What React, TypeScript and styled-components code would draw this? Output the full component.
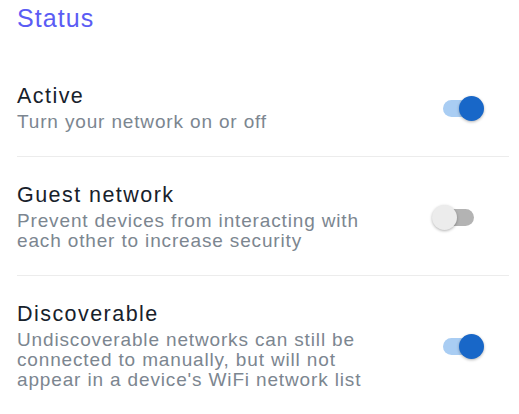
import React from "react";
import styled, { createGlobalStyle } from "styled-components";

const Global = createGlobalStyle`
  html, body { margin: 0; padding: 0; background: #ffffff; }
  body { font-family: "Liberation Sans", Arial, sans-serif; }
`;

const Page = styled.div`
  padding: 4px 10px 0 17px;
  background: #ffffff;
`;

const Heading = styled.h2`
  margin: 0 0 25px 0;
  font-size: 25px;
  line-height: 29px;
  font-weight: 400;
  letter-spacing: 1.1px;
  color: #5b5cf4;
`;

const Row = styled.div<{ $last?: boolean }>`
  display: flex;
  align-items: center;
  justify-content: space-between;
  padding: 26px 0 24px 0;
  border-bottom: ${(p) => (p.$last ? "none" : "1px solid #ececec")};
`;

const TextCol = styled.div`
  display: flex;
  flex-direction: column;
  gap: 4px;
  width: 372px;
`;

const Title = styled.div`
  font-size: 21.5px;
  line-height: 24px;
  letter-spacing: 1.45px;
  color: #17212b;
`;

const Sub = styled.div`
  font-size: 19px;
  line-height: 20px;
  letter-spacing: 0.85px;
  color: #7c8690;
`;

const SwitchBox = styled.div`
  position: relative;
  flex: 0 0 auto;
  width: 52px;
  height: 25px;
  margin-right: 25px;
`;

const Track = styled.div<{ $on: boolean }>`
  position: absolute;
  left: 11px;
  top: 4px;
  width: 31px;
  height: 17px;
  border-radius: 9px;
  background: ${(p) => (p.$on ? "#a9cdf3" : "#b3b3b3")};
`;

const Knob = styled.div<{ $on: boolean }>`
  position: absolute;
  top: 0;
  left: ${(p) => (p.$on ? "27px" : "0px")};
  width: 25px;
  height: 25px;
  border-radius: 50%;
  background: ${(p) => (p.$on ? "#1867c8" : "#ececec")};
  box-shadow: 0 1px 3px rgba(0, 0, 0, 0.3);
`;

const Switch = ({ on }: { on: boolean }) => (
  <SwitchBox>
    <Track $on={on} />
    <Knob $on={on} />
  </SwitchBox>
);

const items = [
  { title: "Active", sub: "Turn your network on or off", on: true },
  {
    title: "Guest network",
    sub: "Prevent devices from interacting with each other to increase security",
    on: false,
  },
  {
    title: "Discoverable",
    sub: "Undiscoverable networks can still be connected to manually, but will not appear in a device's WiFi network list",
    on: true,
  },
];

export default function App() {
  return (
    <>
      <Global />
      <Page>
        <Heading>Status</Heading>
        {items.map((it, i) => (
          <Row key={it.title} $last={i === items.length - 1}>
            <TextCol>
              <Title>{it.title}</Title>
              <Sub>{it.sub}</Sub>
            </TextCol>
            <Switch on={it.on} />
          </Row>
        ))}
      </Page>
    </>
  );
}
